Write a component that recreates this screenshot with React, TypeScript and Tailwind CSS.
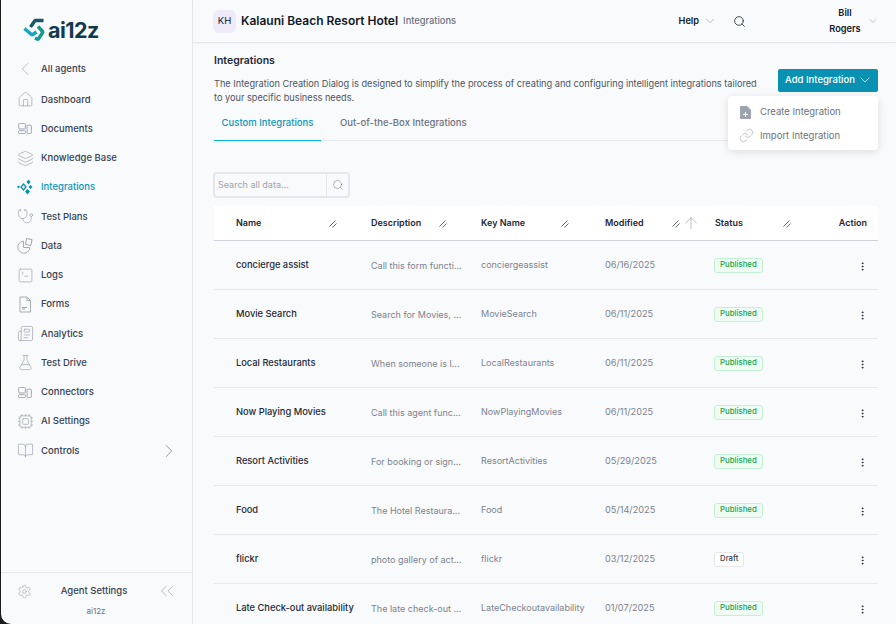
import { ChevronDown, ChevronLeft, ChevronRight, ChevronsLeft, Home, Layers, Stethoscope, SquareTerminal, Newspaper, FlaskConical, Cpu, BookOpen, Settings, Search, Link, EllipsisVertical, ArrowUp } from "lucide-react";
import type { ReactNode } from "react";

function Panels() {
  return (
    <svg width="14" height="11" viewBox="0 0 16 13" fill="none" stroke="currentColor" strokeWidth="1.1">
      <rect x="0.5" y="0.5" width="8" height="6.5" rx="1" />
      <rect x="0.5" y="9" width="8" height="3.5" rx="1" />
      <rect x="10.5" y="2.5" width="5" height="10" rx="1" />
    </svg>
  );
}

function Sparkles() {
  return (
    <svg width="16" height="16" viewBox="0 0 16 16" fill="currentColor">
      <path d="M6.5 5 9 8 6.5 11 4 8Z" fill="none" stroke="currentColor" strokeWidth="1.3" />
      <path d="M11.5 0.5 13.5 3 11.5 5.5 9.5 3Z" />
      <path d="M10.5 10 13 12.5 10.5 15.5 8 12.5Z" />
      <path d="M13.5 6 15.5 8 13.5 10 11.5 8Z" />
      <path d="M1.5 6.5 3 8 1.5 9.5 0 8Z" />
    </svg>
  );
}

function DataPie() {
  return (
    <svg width="16" height="16" viewBox="0 0 16 16" fill="none" stroke="currentColor" strokeWidth="0.9">
      <path d="M6.5 3.2a6 6 0 1 0 6.3 6.3H6.5Z" />
      <path d="M9 1h5.5v6H9Z" transform="rotate(12 11.7 4)" />
    </svg>
  );
}

function FormFile() {
  return (
    <svg width="16" height="17" viewBox="0 0 16 17" fill="none" stroke="currentColor" strokeWidth="0.9">
      <path d="M3 1h7l3.5 3.5V16H3Z" />
      <path d="M10 1v3.5h3.5" />
      <path d="M5 13h3M5 11.5h5" strokeWidth="1.1" />
    </svg>
  );
}

function FileAdd() {
  return (
    <svg width="11" height="13" viewBox="0 0 11 13" fill="#9ca3af">
      <path fillRule="evenodd" d="M1 0h6l4 4v8a1 1 0 0 1-1 1H1a1 1 0 0 1-1-1V1a1 1 0 0 1 1-1ZM5 6v2H3v1h2v2h1V9h2V8H6V6Z" />
    </svg>
  );
}

function Logo() {
  return (
    <svg width="24" height="24" viewBox="0 0 24 24" fill="none" strokeWidth="3.4" strokeLinejoin="bevel">
      <path d="M20.5 2.5H12L7.5 9" stroke="#17566b" />
      <path d="M1.5 10.5 9 17l4.5-3" stroke="#12a5c4" />
      <path d="M15 8.5l5 5.5-5 7.5-3-1.5" stroke="#14998f" />
    </svg>
  );
}

function Resize() {
  return (
    <svg width="8" height="8" viewBox="0 0 8 8" fill="none" stroke="#374151" strokeWidth="0.8" className="shrink-0">
      <path d="M0.5 6.5 6.5 0.5" />
      <path d="M3.5 7.5 7.5 3.5" />
    </svg>
  );
}

const navItems: { label: string; icon: ReactNode; active?: boolean; arrow?: boolean }[] = [
  { label: "Dashboard", icon: <Home size={17} strokeWidth={1} /> },
  { label: "Documents", icon: <Panels /> },
  { label: "Knowledge Base", icon: <Layers size={17} strokeWidth={1} /> },
  { label: "Integrations", icon: <Sparkles />, active: true },
  { label: "Test Plans", icon: <Stethoscope size={17} strokeWidth={1} /> },
  { label: "Data", icon: <DataPie /> },
  { label: "Logs", icon: <SquareTerminal size={17} strokeWidth={1} /> },
  { label: "Forms", icon: <FormFile /> },
  { label: "Analytics", icon: <Newspaper size={17} strokeWidth={1} /> },
  { label: "Test Drive", icon: <FlaskConical size={17} strokeWidth={1} /> },
  { label: "Connectors", icon: <Panels /> },
  { label: "AI Settings", icon: <Cpu size={17} strokeWidth={1} /> },
  { label: "Controls", icon: <BookOpen size={17} strokeWidth={1} />, arrow: true },
];

const rows = [
  { name: "concierge assist", desc: "Call this form functi...", key: "conciergeassist", date: "06/16/2025", status: "Published" },
  { name: "Movie Search", desc: "Search for Movies, ...", key: "MovieSearch", date: "06/11/2025", status: "Published" },
  { name: "Local Restaurants", desc: "When someone is l...", key: "LocalRestaurants", date: "06/11/2025", status: "Published" },
  { name: "Now Playing Movies", desc: "Call this agent func...", key: "NowPlayingMovies", date: "06/11/2025", status: "Published" },
  { name: "Resort Activities", desc: "For booking or sign...", key: "ResortActivities", date: "05/29/2025", status: "Published" },
  { name: "Food", desc: "The Hotel Restaura...", key: "Food", date: "05/14/2025", status: "Published" },
  { name: "flickr", desc: "photo gallery of act...", key: "flickr", date: "03/12/2025", status: "Draft" },
  { name: "Late Check-out availability", desc: "The late check-out ...", key: "LateCheckoutavailability", date: "01/07/2025", status: "Published" },
];

function Sidebar() {
  return (
    <aside className="flex h-full w-[192px] shrink-0 flex-col overflow-hidden rounded-bl-[10px] border-r border-[#e5e7eb] bg-[#f9fafb]">
      <div className="flex h-[59px] items-start pt-[18px] pl-[22px]">
        <Logo />
        <span className="mt-[-1px] ml-[1px] text-[21.5px] leading-[26px] font-bold tracking-[-0.5px] text-[#123a4d]">ai12z</span>
      </div>
      <div className="flex h-[20px] items-center">
        <div className="flex w-[40px] justify-center pl-[8px] text-[#9ca3af]">
          <ChevronLeft size={22} strokeWidth={0.8} className="shrink-0" />
        </div>
        <span className="text-[9.5px] font-medium text-[#374151]">All agents</span>
      </div>
      <nav className="mt-[6px] flex flex-col">
        {navItems.map((item) => (
          <div key={item.label} className="flex h-[29.25px] items-center">
            <div className={`flex w-[40px] justify-center pl-[8px] ${item.active ? "text-[#0891b2]" : "text-[#9ca3af]"}`}>
              {item.icon}
            </div>
            <span className={`text-[9.5px] font-medium ${item.active ? "text-[#0e97bb]" : "text-[#374151]"}`}>{item.label}</span>
            {item.arrow && <ChevronRight size={22} strokeWidth={0.8} className="ml-auto mr-[12px] text-[#6b7280]" />}
          </div>
        ))}
      </nav>
      <div className="mt-auto flex h-[52px] flex-col border-t border-[#e5e7eb] pt-[10px]">
        <div className="flex items-center pl-[16px] pr-[14px] text-[#9ca3af]">
          <Settings size={15} strokeWidth={1} />
          <span className="flex-1 text-center text-[9.5px] font-medium text-[#374151]">Agent Settings</span>
          <ChevronsLeft size={22} strokeWidth={0.8} className="-my-[3px]" />
        </div>
        <span className="mt-[6px] pr-[1px] text-center text-[8px] text-[#6b7280]">ai12z</span>
      </div>
    </aside>
  );
}

function Topbar() {
  return (
    <header className="flex h-[43px] shrink-0 items-center border-b border-[#e5e7eb] pl-[20px] shadow-[0_1px_2px_rgba(0,0,0,0.03)]">
      <div className="flex h-[23px] w-[23px] items-center justify-center rounded-[6px] bg-[#f0ebf8] text-[9.5px] text-[#111827]">KH</div>
      <span className="ml-[5px] text-[12px] font-semibold text-[#111827]">Kalauni Beach Resort Hotel</span>
      <span className="ml-[5px] text-[9.3px] font-medium text-[#6b7280]">Integrations</span>
      <div className="ml-auto flex items-center">
        <span className="text-[9.2px] font-semibold text-[#111827]">Help</span>
        <ChevronDown size={14} strokeWidth={0.8} className="ml-[4px] text-[#6b7280]" />
        <Search size={13} strokeWidth={1.5} className="ml-[16px] text-[#1f2937]" />
        <div className="ml-[81px] flex w-[36px] flex-col items-center text-[9.2px] leading-[16px] font-semibold text-[#111827]">
          <span>Bill</span>
          <span>Rogers</span>
        </div>
        <ChevronDown size={12} strokeWidth={0.8} className="ml-[4px] mr-[17px] text-[#6b7280]" />
      </div>
    </header>
  );
}

function Table() {
  const headers = [
    { label: "Name", w: "w-[135px]", gap: "ml-auto mr-[34px]" },
    { label: "Description", w: "w-[110px]", gap: "ml-[18px]" },
    { label: "Key Name", w: "w-[124px]", gap: "ml-auto mr-[36px]" },
  ];
  return (
    <div className="mt-[8px]">
      <div className="flex h-[35px] items-center border-b border-[#d1d5db] bg-white pl-[22px] pr-[25px] text-[9px] font-semibold text-[#1f2937]">
        {headers.map((h) => (
          <div key={h.label} className={`flex items-center ${h.w}`}>
            <span>{h.label}</span>
            <span className={`${h.gap} mt-[2px]`}><Resize /></span>
          </div>
        ))}
        <div className="flex w-[110px] items-center">
          <span>Modified</span>
          <span className="ml-auto mt-[2px]"><Resize /></span>
          <ArrowUp size={18} strokeWidth={0.9} className="ml-[2px] mr-[15px] text-[#9ca3af]" />
        </div>
        <div className="flex w-[76px] items-center">
          <span>Status</span>
          <span className="ml-auto mt-[2px]"><Resize /></span>
        </div>
        <span className="ml-auto mr-[-14px]">Action</span>
      </div>
      {rows.map((r) => (
        <div key={r.name} className="flex h-[49px] items-center border-b border-[#e5e7eb] pl-[22px] pr-[10px] text-[9px]">
          <span className="mt-[1px] w-[135px] text-[9.3px] font-medium text-[#1f2937]">{r.name}</span>
          <span className="mt-[1px] w-[110px] text-[#7b8290]">{r.desc}</span>
          <span className="w-[124px] text-[#7b8290]">{r.key}</span>
          <span className="w-[109px] text-[9.2px] text-[#7b8290]">{r.date}</span>
          <span className={`mt-[1px] flex h-[15px] items-center rounded-[3px] border px-[5px] text-[7.8px] font-medium ${r.status === "Published" ? "border-[#c3f0d4] bg-[#effcf4] text-[#16a34a]" : "border-[#e5e7eb] bg-white text-[#374151]"}`}>{r.status}</span>
          <EllipsisVertical size={11} className="ml-auto mt-[4px] text-[#1f2937]" />
        </div>
      ))}
    </div>
  );
}

export default function App() {
  return (
    <div className="flex h-[624px] w-[896px] overflow-hidden bg-[#1c1c1c] pl-[1px] font-['Inter',sans-serif]">
      <Sidebar />
      <main className="flex min-w-0 flex-1 flex-col bg-[#f9fafb]">
        <Topbar />
        <div className="relative flex-1 overflow-hidden pl-[21px] pr-[18px]">
          <div className="mt-[10px] text-[10.5px] font-semibold text-[#1f2937]">Integrations</div>
          <div className="flex items-start justify-between">
            <p className="mt-[8px] w-[545px] text-[9.2px] leading-[14px] text-[#4b5563]">
              The Integration Creation Dialog is designed to simplify the process of creating and configuring intelligent integrations tailored to your specific business needs.
            </p>
            <button className="flex h-[23px] w-[100px] items-center gap-[2px] rounded-[2px] bg-[#0891b2] pl-[7px] text-[9.5px] font-medium text-white">
              Add Integration
              <ChevronDown size={16} strokeWidth={1} />
            </button>
          </div>
          <div className="flex h-[36px] items-stretch border-b border-[#e5e7eb] text-[9.5px] font-medium">
            <div className="-mb-[1px] flex w-[107px] items-center justify-center border-b border-[#06b6d4] pt-[2px] text-[#0e97bb]">Custom Integrations</div>
            <div className="ml-[19px] flex items-center pt-[2px] text-[#6b7280]">Out-of-the-Box Integrations</div>
          </div>
          <div className="mt-[31px] -ml-[1px] flex h-[26px] w-[137px] items-stretch rounded-[4px] border-2 border-[#e5e7eb]">
            <span className="flex flex-1 items-center pl-[3px] text-[9px] text-[#9ca3af]">Search all data...</span>
            <span className="flex w-[22px] items-center justify-center border-l border-[#e5e7eb] text-[#6b7280]">
              <Search size={12} strokeWidth={1} />
            </span>
          </div>
          <Table />
          <div className="absolute top-[53px] right-[18px] flex h-[54px] w-[150px] flex-col justify-center gap-[9px] rounded-[4px] bg-white pt-[1px] pl-[12px] text-[9.5px] text-[#6b7280] shadow-[0_2px_8px_rgba(0,0,0,0.12)]">
            <div className="flex items-center gap-[9px] pt-[1px]"><FileAdd />Create Integration</div>
            <div className="flex items-center gap-[6px]"><Link size={15} strokeWidth={1} className="-ml-[1px] text-[#9ca3af]" />Import Integration</div>
          </div>
        </div>
      </main>
    </div>
  );
}
